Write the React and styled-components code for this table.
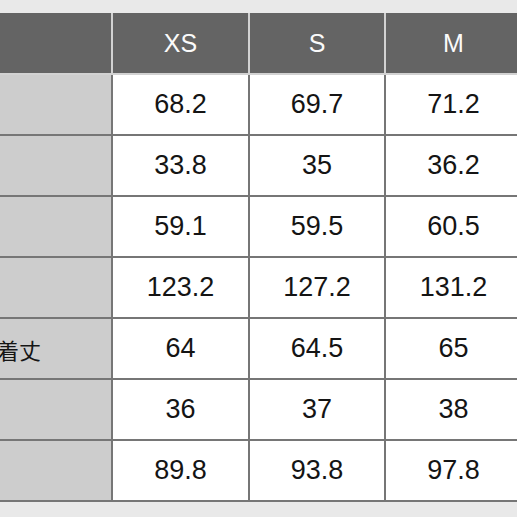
import React from "react";
import styled, { createGlobalStyle } from "styled-components";

const GlobalStyle = createGlobalStyle`
  html, body {
    margin: 0;
    padding: 0;
    background: #e9e9e9;
    overflow: hidden;
  }
  body {
    font-family: "Liberation Sans", Arial, "Noto Sans CJK JP", sans-serif;
  }
`;

const sizes = ["XS", "S", "M"];

const rows = [
  { label: "", values: ["68.2", "69.7", "71.2"] },
  { label: "", values: ["33.8", "35", "36.2"] },
  { label: "", values: ["59.1", "59.5", "60.5"] },
  { label: "", values: ["123.2", "127.2", "131.2"] },
  { label: "着丈", values: ["64", "64.5", "65"] },
  { label: "", values: ["36", "37", "38"] },
  { label: "", values: ["89.8", "93.8", "97.8"] },
];

const Page = styled.div`
  width: 517px;
  height: 517px;
  overflow: hidden;
  padding-top: 13px;
  box-sizing: border-box;
  background: #e9e9e9;
`;

const Grid = styled.div`
  display: grid;
  grid-template-columns: 111px 135px 134px 135px;
  column-gap: 2px;
  row-gap: 2px;
  width: 521px;
`;

const HeaderRow = styled(Grid)`
  background: #d2d2d2;
  padding-bottom: 2px;
  grid-auto-rows: 60px;
`;

const Body = styled(Grid)`
  background: #767676;
  padding-bottom: 2px;
  grid-auto-rows: 59px;
`;

const HeadCell = styled.div`
  background: #646464;
  color: #fafafa;
  font-size: 25px;
  display: flex;
  align-items: center;
  justify-content: center;
`;

const LabelCell = styled.div`
  background: #cdcdcd;
  color: #151515;
  font-family: "Noto Sans CJK JP", sans-serif;
  font-size: 22px;
  display: flex;
  align-items: center;
  overflow: hidden;
  white-space: nowrap;
  text-indent: -3px;
`;

const ValueCell = styled.div`
  background: #ffffff;
  color: #141414;
  font-size: 27px;
  display: flex;
  align-items: center;
  justify-content: center;
`;

export default function App() {
  return (
    <>
      <GlobalStyle />
      <Page>
        <HeaderRow>
          <HeadCell />
          {sizes.map((s) => (
            <HeadCell key={s}>{s}</HeadCell>
          ))}
        </HeaderRow>
        <Body>
          {rows.map((row, i) => (
            <React.Fragment key={i}>
              <LabelCell>{row.label}</LabelCell>
              {row.values.map((v, j) => (
                <ValueCell key={j}>{v}</ValueCell>
              ))}
            </React.Fragment>
          ))}
        </Body>
      </Page>
    </>
  );
}
